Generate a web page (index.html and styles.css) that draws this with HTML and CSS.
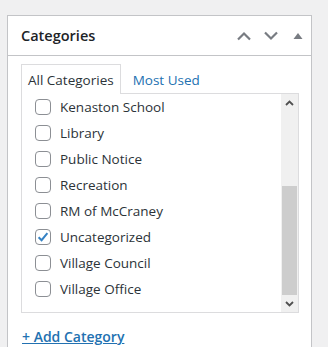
FILE: index.html
```html
<!DOCTYPE html>
<html>
<head>
<meta charset="utf-8">
<link rel="stylesheet" href="styles.css">
</head>
<body>
<div class="postbox">
  <div class="postbox-header">
    <h2 class="title">Categories</h2>
    <div class="handle-actions">
      <span class="handle-btn"><svg width="16" height="10" viewBox="0 0 16 10"><path d="M2 8.5 L8 2.5 L14 8.5" fill="none" stroke="#787c82" stroke-width="2.2"/></svg></span>
      <span class="handle-btn"><svg width="16" height="10" viewBox="0 0 16 10"><path d="M2 1.5 L8 7.5 L14 1.5" fill="none" stroke="#787c82" stroke-width="2.2"/></svg></span>
      <span class="handle-btn"><svg width="10" height="8" viewBox="0 0 10 8"><path d="M0.5 7 L5 1 L9.5 7 Z" fill="#787c82"/></svg></span>
    </div>
  </div>
  <div class="inside">
    <ul class="tabs">
      <li class="tab tab-active">All Categories</li>
      <li class="tab"><a class="tab-link">Most Used</a></li>
    </ul>
    <div class="tabs-panel">
      <ul class="checklist">
        <li class="item"><span class="cb"></span><span class="label">Kenaston School</span></li>
        <li class="item"><span class="cb"></span><span class="label">Library</span></li>
        <li class="item"><span class="cb"></span><span class="label">Public Notice</span></li>
        <li class="item"><span class="cb"></span><span class="label">Recreation</span></li>
        <li class="item"><span class="cb"></span><span class="label">RM of McCraney</span></li>
        <li class="item"><span class="cb cb-checked"><svg width="14" height="14" viewBox="0 0 14 14"><path d="M2.6 7.2 L5.6 10.2 L11.4 3.2" fill="none" stroke="#3582c4" stroke-width="2"/></svg></span><span class="label">Uncategorized</span></li>
        <li class="item"><span class="cb"></span><span class="label">Village Council</span></li>
        <li class="item"><span class="cb"></span><span class="label">Village Office</span></li>
      </ul>
      <div class="scrollbar">
        <div class="sb-arrow"><svg width="9" height="6" viewBox="0 0 9 6"><path d="M1 5 L4.5 1.5 L8 5" fill="none" stroke="#505050" stroke-width="1.8"/></svg></div>
        <div class="sb-track"><div class="sb-thumb"></div></div>
        <div class="sb-arrow"><svg width="9" height="6" viewBox="0 0 9 6"><path d="M1 1 L4.5 4.5 L8 1" fill="none" stroke="#505050" stroke-width="1.8"/></svg></div>
      </div>
    </div>
    <a class="add-link">+ Add Category</a>
  </div>
</div>
</body>
</html>
```
FILE: styles.css
```css
html, body {
  margin: 0;
  padding: 0;
}
body {
  background: #f0f0f1;
  height: 347px;
  overflow: hidden;
  padding: 15px 0 0 7px;
  box-sizing: border-box;
  font-family: "Open Sans", "Noto Sans", sans-serif;
  color: #2c3338;
}
.postbox {
  width: 305px;
  box-sizing: border-box;
  background: #fff;
  border: 1px solid #c3c4c7;
  border-bottom: none;
  height: 332px;
  overflow: hidden;
}
.postbox-header {
  height: 40px;
  box-sizing: border-box;
  border-bottom: 1px solid #c3c4c7;
  display: flex;
  align-items: center;
  justify-content: space-between;
  padding-left: 13px;
}
.title {
  margin: 0;
  font-size: 14.5px;
  font-weight: 600;
  color: #1d2327;
}
.handle-actions {
  display: flex;
  height: 100%;
}
.handle-btn {
  width: 27px;
  display: flex;
  align-items: center;
  justify-content: center;
}
.inside {
  padding: 8px 12px 0 13px;
}
.tabs {
  list-style: none;
  margin: 0;
  padding: 0;
  display: flex;
  align-items: flex-end;
  position: relative;
  z-index: 1;
  margin-bottom: -1px;
}
.tab {
  font-size: 13.5px;
  height: 30px;
  box-sizing: border-box;
  padding: 0 6px;
  display: flex;
  align-items: center;
  border: 1px solid transparent;
  border-bottom: none;
}
.tab-active {
  border-color: #dcdcde;
  background: #fff;
  color: #2c3338;
}
.tab-link {
  color: #2271b1;
  padding-left: 5px;
}
.tabs-panel {
  border: 1px solid #dcdcde;
  height: 220px;
  box-sizing: border-box;
  display: flex;
  background: #fff;
}
.checklist {
  list-style: none;
  margin: 0;
  padding: 0 0 0 13px;
  flex: 1;
}
.item {
  height: 26px;
  display: flex;
  align-items: center;
  font-size: 13.5px;
}
.cb {
  width: 16px;
  height: 16px;
  box-sizing: border-box;
  border: 1px solid #8c8f94;
  border-radius: 4px;
  margin-right: 9px;
  display: flex;
  align-items: center;
  justify-content: center;
  flex: none;
}
.scrollbar {
  width: 17px;
  background: #f0f0f0;
  display: flex;
  flex-direction: column;
}
.sb-arrow {
  height: 17px;
  display: flex;
  align-items: center;
  justify-content: center;
  flex: none;
}
.sb-track {
  flex: 1;
  display: flex;
  flex-direction: column;
  justify-content: flex-end;
}
.sb-thumb {
  height: 109px;
  background: #cdcdcd;
  margin: 0 1px;
}
.add-link {
  display: inline-block;
  margin-top: 14px;
  margin-left: 1px;
  color: #2271b1;
  font-weight: 600;
  font-size: 14px;
  text-decoration: underline;
}
```
